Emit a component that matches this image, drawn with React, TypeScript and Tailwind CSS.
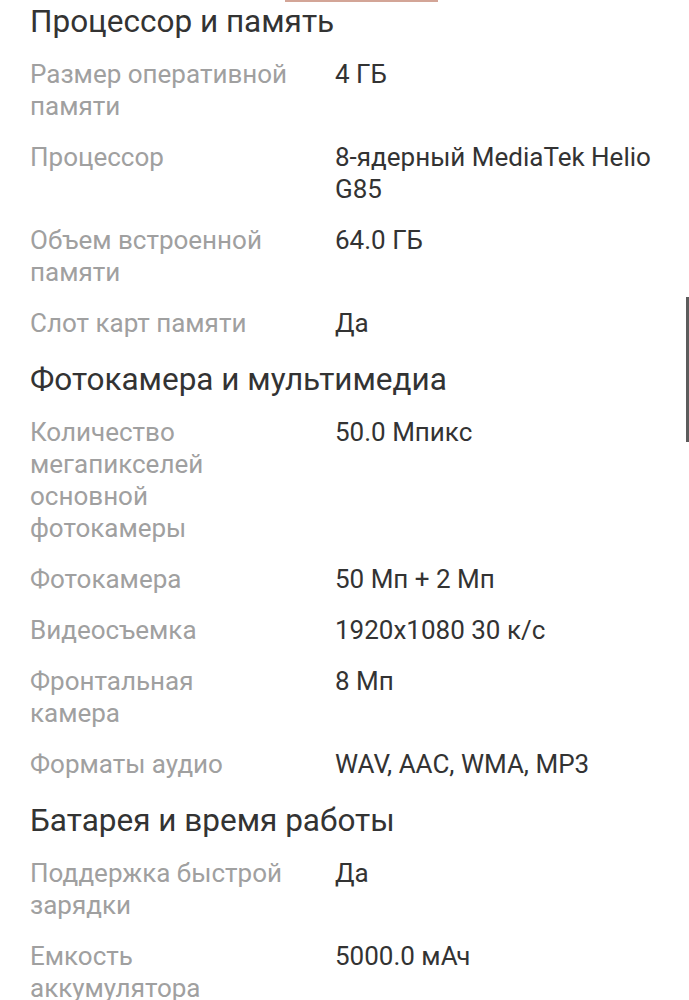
type Spec = { label: string; value: string }

const sections: { title: string; rows: Spec[] }[] = [
  {
    title: 'Процессор и память',
    rows: [
      { label: 'Размер оперативной памяти', value: '4 ГБ' },
      { label: 'Процессор', value: '8-ядерный MediaTek Helio G85' },
      { label: 'Объем встроенной памяти', value: '64.0 ГБ' },
      { label: 'Слот карт памяти', value: 'Да' },
    ],
  },
  {
    title: 'Фотокамера и мультимедиа',
    rows: [
      { label: 'Количество мегапикселей основной фотокамеры', value: '50.0 Мпикс' },
      { label: 'Фотокамера', value: '50 Мп + 2 Мп' },
      { label: 'Видеосъемка', value: '1920x1080 30 к/с' },
      { label: 'Фронтальная камера', value: '8 Мп' },
      { label: 'Форматы аудио', value: 'WAV, AAC, WMA, MP3' },
    ],
  },
  {
    title: 'Батарея и время работы',
    rows: [
      { label: 'Поддержка быстрой зарядки', value: 'Да' },
      { label: 'Емкость аккумулятора', value: '5000.0 мАч' },
    ],
  },
]

function SpecRow({ label, value }: Spec) {
  return (
    <div className="grid grid-cols-[305px_1fr] py-[9.5px] text-[26px] leading-[32px]">
      <div className="max-w-[258px] text-[#a0a0a0]">{label}</div>
      <div className="text-[#333333]">{value}</div>
    </div>
  )
}

export default function App() {
  return (
    <div
      className="relative h-[1000px] w-[689px] overflow-hidden bg-white"
      style={{ fontFamily: 'Roboto, "Noto Sans", sans-serif' }}
    >
      {/* tab indicator, cut off at top */}
      <div className="absolute left-[285px] top-0 h-[2px] w-[153px] bg-[#d3a597]" />
      {/* scrollbar */}
      <div className="absolute right-0 top-[297px] h-[145px] w-[3px] bg-[#5c5c5c]" />

      <div className="px-[30px] pt-[2px]">
        {sections.map((s, i) => (
          <section key={s.title} className={i > 0 ? 'mt-[12px]' : ''}>
            <h2 className="mb-[6px] text-[31.5px] leading-[40px] text-[#333333]">{s.title}</h2>
            {s.rows.map((r) => (
              <SpecRow key={r.label} {...r} />
            ))}
          </section>
        ))}
      </div>
    </div>
  )
}
